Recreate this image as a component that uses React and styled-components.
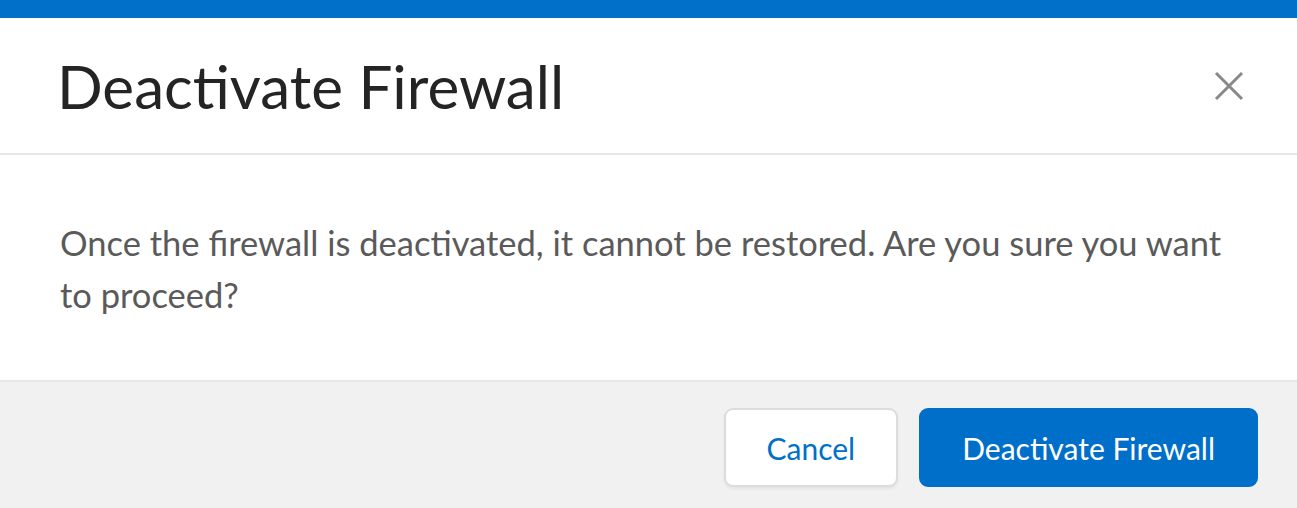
import React from "react";
import styled, { createGlobalStyle } from "styled-components";

const Global = createGlobalStyle`
  html, body { margin: 0; padding: 0; background: #fff; }
  body { font-family: Lato, "Open Sans", sans-serif; }
`;

const Modal = styled.div`
  width: 1297px;
  display: flex;
  flex-direction: column;
  background: #fff;
`;

const TopBar = styled.div`
  height: 18px;
  background: #0070c9;
`;

const Header = styled.header`
  height: 137px;
  box-sizing: border-box;
  padding: 0 52px 0 57px;
  display: flex;
  align-items: center;
  justify-content: space-between;
  border-bottom: 2px solid #e6e6e6;
`;

const Title = styled.h1`
  margin: 0;
  font-family: Lato, sans-serif;
  font-weight: 400;
  font-size: 60.2px;
  line-height: 1;
  color: #242424;
  padding-top: 2px;
`;

const CloseButton = styled.button`
  width: 32px;
  height: 32px;
  padding: 0;
  border: 0;
  background: transparent;
  display: flex;
  align-items: center;
  justify-content: center;
  cursor: pointer;
`;

const Body = styled.div`
  padding: 62px 60px 59px;
`;

const Message = styled.p`
  margin: 0;
  font-family: Lato, sans-serif;
  font-size: 34.5px;
  line-height: 52px;
  color: #5a5a5a;
  max-width: 1190px;
`;

const Footer = styled.footer`
  border-top: 2px solid #e6e6e6;
  background: #f1f1f1;
  padding: 26px 39px 30px;
  display: flex;
  justify-content: flex-end;
  gap: 21px;
`;

const Button = styled.button`
  height: 79px;
  box-sizing: border-box;
  border-radius: 9px;
  font-family: Lato, sans-serif;
  font-size: 30px;
  padding: 0 41px;
  white-space: nowrap;
  cursor: pointer;
  border: 2px solid ${(p) => (p.$primary ? "#006fca" : "#dcdcdc")};
  background: ${(p) => (p.$primary ? "#006fca" : "#fff")};
  color: ${(p) => (p.$primary ? "#fff" : "#0070c9")};
  box-shadow: ${(p) => (p.$primary ? "none" : "0 2px 3px rgba(0,0,0,0.06)")};
`;

export default function App() {
  return (
    <>
      <Global />
      <Modal>
        <TopBar />
        <Header>
          <Title>Deactivate Firewall</Title>
          <CloseButton aria-label="Close">
            <svg width="30" height="30" viewBox="0 0 30 30">
              <path d="M2 2 L28 28 M28 2 L2 28" stroke="#888" strokeWidth="3" />
            </svg>
          </CloseButton>
        </Header>
        <Body>
          <Message>
            Once the firewall is deactivated, it cannot be restored. Are you sure you want to proceed?
          </Message>
        </Body>
        <Footer>
          <Button>Cancel</Button>
          <Button $primary>Deactivate Firewall</Button>
        </Footer>
      </Modal>
    </>
  );
}
